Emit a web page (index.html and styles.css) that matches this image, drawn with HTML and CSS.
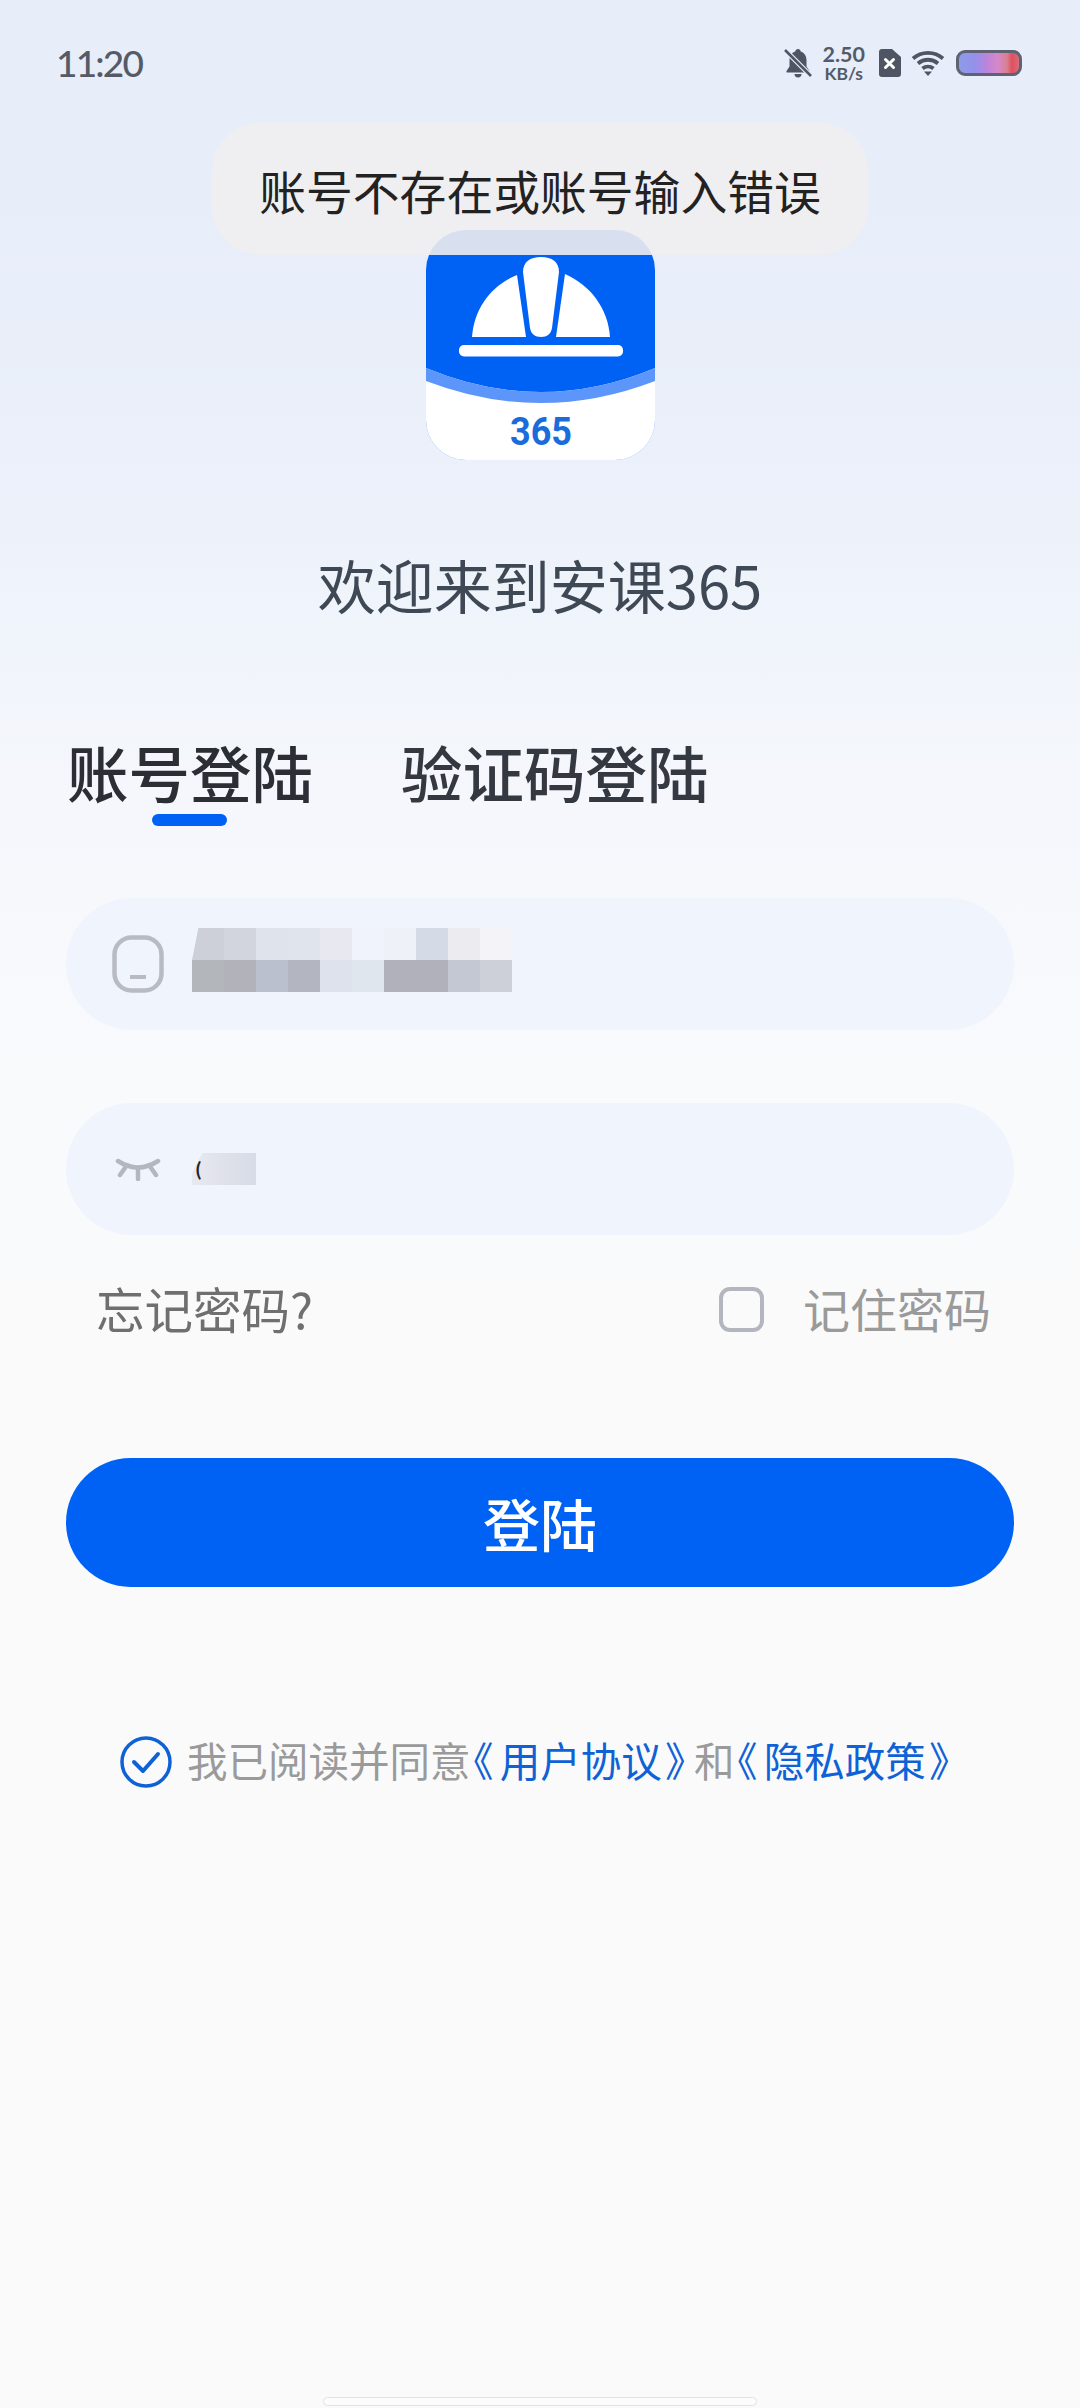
FILE: index.html
```html
<!DOCTYPE html>
<html lang="zh-CN">
  <head>
    <meta charset="UTF-8" />
    <meta name="viewport" content="width=device-width, initial-scale=1.0" />
    <title>安课365</title>
    <link rel="stylesheet" href="styles.css">
  </head>
  <body>
    <div class="page">
      <header class="status">
        <span class="time">11:20</span>
        <div class="status-icons">
          <svg class="bell" viewBox="0 0 28 30" width="28" height="30">
            <path d="M14 1c-1.500 0-2.500 1-2.700 2.400C7.500 4.600 5.500 8 5.500 12v6.500L2.500 23v1.500h23V23l-3-4.500V12c0-4-2-7.400-5.800-8.600C16.500 2 15.500 1 14 1z" fill="#4f5562" />
            <path d="M10.500 26a3.500 3.500 0 0 0 7 0z" fill="#4f5562" />
            <path d="M1 2l26 26" stroke="#e6ecf8" stroke-width="5" />
            <path d="M1 2l26 26" stroke="#4f5562" stroke-width="2.500" />
          </svg>
          <div class="speed">
            <span class="speed-num">2.50</span>
            <span class="speed-unit">KB/s</span>
          </div>
          <svg class="sim" viewBox="0 0 23 28" width="23" height="28">
            <path d="M4 0h10l9 8v17a3 3 0 0 1-3 3H4a3 3 0 0 1-3-3V3a3 3 0 0 1 3-3z" fill="#4f5562" />
            <path d="M7.500 10.500l8 8m0-8l-8 8" stroke="#fff" stroke-width="3" stroke-linecap="round" />
          </svg>
          <svg class="wifi" viewBox="0 0 34 26" width="34" height="26" fill="none" stroke="#4f5562" stroke-width="3.800">
            <path d="M2 8.500C10.500 1 23.500 1 32 8.500" />
            <path d="M7 13.500c6-5 14-5 20 0" />
            <path d="M11.500 18.500c3.200-2.600 7.800-2.600 11 0" />
            <path d="M13 21.500h8L17 26z" fill="#4f5562" stroke="none" />
          </svg>
          <div class="battery"></div>
        </div>
      </header>

      <svg class="logo" viewBox="0 0 229 230" width="229" height="230">
        <path d="M0 138Q115 186 229 138V40A40 40 0 0 0 189 0H40A40 40 0 0 0 0 40z" fill="#0062f5" />
        <path d="M0 138Q115 186 229 138V190A40 40 0 0 1 189 230H40A40 40 0 0 1 0 190z" fill="#5c96fa" />
        <path d="M0 151Q115 195 229 151V190A40 40 0 0 1 189 230H40A40 40 0 0 1 0 190z" fill="#fff" />
        <path d="M46 107C48 78 66 55 91 45L100 107z" fill="#fff" />
        <path d="M139 44C164 55 182 78 184 107H130z" fill="#fff" />
        <path d="M97 42C97 32 104 27 115 27S133 32 133 42L126 98C125 104 121 107 115 107S105 104 104 98z" fill="#fff" />
        <rect x="33" y="115" width="164" height="11.500" rx="5" fill="#fff" />
        <text class="logo-num" x="115" y="215" text-anchor="middle" textLength="62" lengthAdjust="spacingAndGlyphs">365</text>
      </svg>

      <h1 class="welcome">欢迎来到安课365</h1>

      <div class="tabs">
        <div class="tab active">
          <span>账号登陆</span>
          <i class="tab-bar"></i>
        </div>
        <div class="tab">
          <span>验证码登陆</span>
        </div>
      </div>

      <div class="field field-account">
        <span class="field-icon">
          <svg viewBox="0 0 52 58" width="52" height="58" fill="none" stroke="#b8bbc4" stroke-width="4.500">
            <rect x="2.500" y="2.500" width="47" height="53" rx="17" />
            <path d="M18 42h16" stroke-width="4" />
          </svg>
        </span>
        <span class="mosaic"></span>
      </div>

      <div class="field field-password">
        <span class="field-icon">
          <svg viewBox="0 0 46 24" width="46" height="24" fill="none" stroke="#b4b7bf" stroke-width="4.500" stroke-linecap="round">
            <path d="M3 4Q23 17 43 4" />
            <path d="M23 11v11M12 8L5 18M34 8L41 18" />
          </svg>
        </span>
        <span class="mosaic-small">(</span>
      </div>

      <div class="options">
        <span class="forgot">忘记密码?</span>
        <div class="remember">
          <i class="checkbox"></i>
          <span>记住密码</span>
        </div>
      </div>

      <button class="login-btn">登陆</button>

      <div class="agree">
        <svg viewBox="0 0 52 52" width="52" height="52" fill="none" stroke="#0f62d6">
          <circle cx="26" cy="26" r="24" stroke-width="3.500" />
          <path d="M14 26l9 9 15-17" stroke-width="4" stroke-linecap="round" stroke-linejoin="round" />
        </svg>
        <p>我已阅读并同意<a><span class="open">《</span>用户协议<span class="close">》</span></a>和<a><span class="open">《</span>隐私政策<span class="close">》</span></a></p>
      </div>

      <div class="home-bar"></div>

      <div class="toast">账号不存在或账号输入错误</div>
    </div>
  </body>
</html>
```

FILE: styles.css
```css
* {
  box-sizing: border-box;
}

body {
  margin: 0;
  font-family: "Noto Sans CJK SC", "Noto Sans", sans-serif;
  background: #fafafa;
}

.page {
  position: relative;
  display: flex;
  flex-direction: column;
  width: 1080px;
  height: 2408px;
  overflow: hidden;
  background: linear-gradient(180deg, #e8eef9 0, #e7edf9 200px, #ebf0fa 460px, #f0f4fb 620px, #f5f7fc 800px, #f9fafc 1050px, #fafafb 1300px, #fafafa 2408px);
}

/* status bar */
.status {
  display: flex;
  justify-content: space-between;
  align-items: center;
  height: 46px;
  margin-top: 40px;
  padding: 0 58px 0 56px;
}

.time {
  position: relative;
  top: -1px;
  font-family: Lato, sans-serif;
  font-size: 37px;
  font-weight: 500;
  letter-spacing: -1.800px;
  color: #555b66;
}

.status-icons {
  display: flex;
  align-items: center;
}

.bell {
  margin-right: 10px;
}

.speed {
  display: flex;
  flex-direction: column;
  align-items: center;
  font-family: Lato, sans-serif;
  font-weight: 700;
  color: #555b66;
  margin-right: 13px;
}

.speed-num {
  font-size: 21.500px;
  line-height: 22px;
}

.speed-unit {
  font-size: 17.500px;
  line-height: 18px;
}

.wifi {
  margin-left: 10px;
}

.battery {
  width: 66px;
  height: 26px;
  margin-left: 11px;
  border: 3.500px solid #5d6373;
  border-radius: 9px;
  background: linear-gradient(90deg, #8f9be8, #9590ea 28%, #c083da 48%, #d488cb 64%, #d98092 80%, #e0505f 88%, #da6a78);
}

/* logo and title */
.logo {
  display: block;
  align-self: center;
  margin-top: 144px;
}

.logo-num {
  font-family: Roboto, sans-serif;
  font-size: 39px;
  font-weight: 700;
  fill: #1a6cdc;
}

.welcome {
  margin: 84px 0 0;
  font-size: 58px;
  font-weight: 400;
  line-height: 80px;
  text-align: center;
  color: #3f4855;
}

/* tabs */
.tabs {
  display: flex;
  gap: 88px;
  height: 93px;
  margin-top: 109px;
  padding-left: 67px;
}

.tab {
  display: flex;
  flex-direction: column;
  align-items: center;
  font-size: 61.500px;
  font-weight: 500;
  line-height: 78px;
  color: #343840;
}

.tab.active {
  color: #2b2e35;
}

.tab-bar {
  width: 75px;
  height: 12px;
  margin: 3px 2px 0 0;
  border-radius: 6px;
  background: #0062f5;
}

/* form */
.field {
  display: flex;
  align-items: center;
  gap: 28px;
  height: 132px;
  margin: 0 66px;
  padding-left: 46px;
  border-radius: 66px;
  background: #f0f4fc;
}

.field-account {
  margin-top: 72px;
}

.field-password {
  margin-top: 73px;
}

.field-icon {
  display: flex;
  justify-content: center;
  width: 52px;
}

.mosaic {
  width: 320px;
  height: 64px;
  margin-top: -8px;
  clip-path: polygon(2% 0, 100% 0, 100% 100%, 0 100%, 0 50%);
  background:
    linear-gradient(90deg,
      #cdd0d9 0 10%, #d2d5de 10% 20%, #dfe3ec 20% 30%, #e0e4ed 30% 40%, #e8e8f0 40% 50%,
      #f0f3fb 50% 60%, #eef2f8 60% 70%, #d5dbe6 70% 80%, #ebebf0 80% 90%, #f3f3f8 90%) top / 100% 50% no-repeat,
    linear-gradient(90deg,
      #b3b7bb 0 10%, #b1b2ba 10% 20%, #bac0cd 20% 30%, #b3b5c0 30% 40%, #dde2ec 40% 50%,
      #e0e6ee 50% 60%, #b0b1bb 60% 80%, #c4c8d3 80% 90%, #cdd0d9 90%) bottom / 100% 50% no-repeat;
}

.mosaic-small {
  width: 64px;
  height: 32px;
  padding-left: 3px;
  font-size: 18px;
  font-weight: 700;
  line-height: 30px;
  color: #222;
  clip-path: polygon(16% 0, 100% 0, 100% 100%, 0 100%, 0 65%);
  background: linear-gradient(90deg, #e8e9f0, #dfe1ea 50%, #d6dce6);
}

.options {
  display: flex;
  justify-content: space-between;
  align-items: center;
  height: 60px;
  margin-top: 43px;
  padding: 0 89px 0 96px;
  font-size: 48.500px;
  line-height: 60px;
}

.forgot {
  color: #6f6f6f;
}

.remember {
  display: flex;
  align-items: center;
  gap: 39px;
  font-size: 47px;
  color: #9a9a9a;
}

.checkbox {
  width: 45px;
  height: 45px;
  margin-top: 3px;
  border: 4px solid #b4b6bf;
  border-radius: 11px;
}

.login-btn {
  display: block;
  height: 129px;
  margin: 120px 66px 0;
  padding-bottom: 3px;
  border: 0;
  border-radius: 65px;
  background: #0062f5;
  color: #fff;
  font-family: inherit;
  font-size: 57px;
  font-weight: 500;
}

.agree {
  display: flex;
  align-items: center;
  gap: 15px;
  height: 60px;
  margin-top: 145px;
  padding-left: 120px;
  color: #9a9a9a;
  font-size: 40.500px;

  p {
    margin: -5px 0 0;
    white-space: nowrap;
  }

  a {
    color: #0f62d6;
  }

  .open,
  .close {
    font-feature-settings: "palt";
  }

  .open {
    padding: 0 7px 0 2px;
  }

  .close {
    padding: 0 8px 0 4px;
  }
}

.home-bar {
  align-self: center;
  width: 434px;
  height: 9px;
  margin-top: auto;
  margin-bottom: 2px;
  border: 1.500px solid #e2e2e2;
  border-radius: 5px;
  background: #fcfcfc;
}

/* toast lies over the logo */
.toast {
  position: absolute;
  top: 123px;
  left: 212px;
  width: 656px;
  height: 132px;
  border-radius: 48px;
  background: rgba(239, 238, 240, 0.9);
  font-size: 46.800px;
  line-height: 134px;
  text-align: center;
  color: #222;
}
```
